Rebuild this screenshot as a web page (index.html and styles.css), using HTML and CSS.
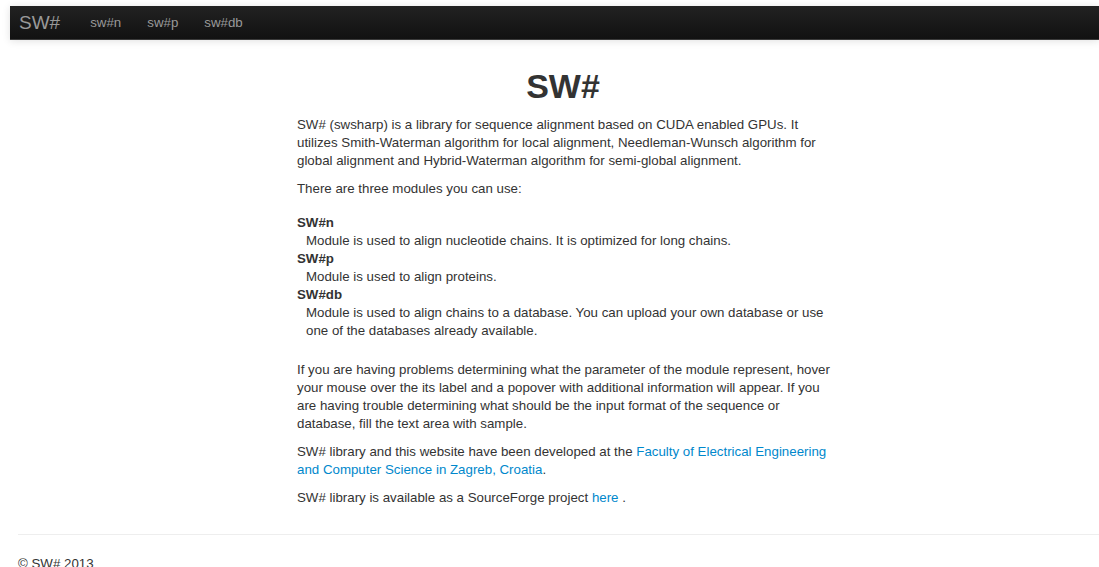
FILE: index.html
```html
<!DOCTYPE html>
<html lang="en">
<head>
<meta charset="utf-8">
<title>SW#</title>
<link rel="stylesheet" href="styles.css">
</head>
<body>
<div class="navbar">
  <a class="brand" href="#">SW#</a>
  <ul class="nav">
    <li><a href="#">sw#n</a></li>
    <li><a href="#">sw#p</a></li>
    <li><a href="#">sw#db</a></li>
  </ul>
</div>

<div class="container">
  <div class="intro">
    <h1>SW#</h1>
    <p>SW# (swsharp) is a library for sequence alignment based on CUDA enabled GPUs. It utilizes Smith-Waterman algorithm for local alignment, Needleman-Wunsch algorithm for global alignment and Hybrid-Waterman algorithm for semi-global alignment.</p>
    <p>There are three modules you can use:</p>
    <dl class="modules">
      <dt>SW#n</dt>
      <dd>Module is used to align nucleotide chains. It is optimized for long chains.</dd>
      <dt>SW#p</dt>
      <dd>Module is used to align proteins.</dd>
      <dt>SW#db</dt>
      <dd>Module is used to align chains to a database. You can upload your own database or use one of the databases already available.</dd>
    </dl>
    <p>If you are having problems determining what the parameter of the module represent, hover your mouse over the its label and a popover with additional information will appear. If you are having trouble determining what should be the input format of the sequence or database, fill the text area with sample.</p>
    <p>SW# library and this website have been developed at the <a href="#">Faculty of Electrical Engineering and Computer Science in Zagreb, Croatia</a>.</p>
    <p>SW# library is available as a SourceForge project <a href="#">here</a> .</p>
  </div>
</div>

<footer class="footer">
  <p>&copy; SW# 2013</p>
</footer>
</body>
</html>
```

FILE: styles.css
```css
html, body {
  margin: 0;
  padding: 0;
}

body {
  padding: 6px 0 0 10px;
  font-family: "Liberation Sans", Arial, sans-serif;
  font-size: 13.3px;
  line-height: 18px;
  color: #333;
  background: #fff;
}

a {
  color: #0088cc;
  text-decoration: none;
}

/* top bar */
.navbar {
  display: flex;
  align-items: center;
  height: 33px;
  background: linear-gradient(to bottom, #222 0%, #111 100%);
  border-bottom: 1px solid #3a3a3a;
  box-shadow: 0 1px 8px rgba(0, 0, 0, 0.12);
}

.brand {
  display: block;
  padding: 0 17px 0 9px;
  font-size: 19px;
  line-height: 33px;
  color: #999;
}

.nav {
  display: flex;
  margin: 0;
  padding: 0;
  list-style: none;
}

.nav a {
  display: block;
  padding: 0 13px;
  line-height: 33px;
  color: #999;
}

/* main column */
.container {
  padding-left: 287px;
}

.intro {
  width: 541px;
}

h1 {
  margin: 26px 0 10px;
  padding-right: 9px;
  font-size: 34px;
  line-height: 40px;
  font-weight: bold;
  text-align: center;
  color: #333;
}

p {
  margin: 0 0 10px;
}

.modules {
  margin: 16px 0 21px;
}

.modules dt {
  font-weight: bold;
}

.modules dd {
  margin-left: 9px;
}

/* footer */
.footer {
  margin: 27px 0 0 8px;
  padding-top: 20px;
  border-top: 1px solid #eee;
}

.footer p {
  margin: 0;
}
```
